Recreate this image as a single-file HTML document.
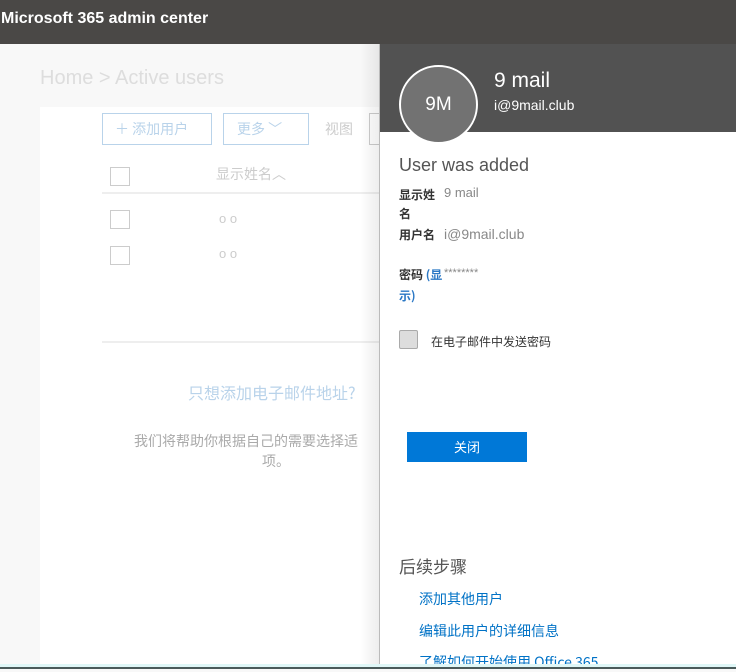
<!DOCTYPE html>
<html><head><meta charset="utf-8"><style>
*{margin:0;padding:0;box-sizing:border-box}
body{width:736px;height:669px;overflow:hidden;position:relative;background:#f8f8f8;font-family:"Liberation Sans","Noto Sans CJK SC",sans-serif}
.abs{position:absolute}
.top{left:0;top:0;width:736px;height:44px;background:#4a4846;color:#fff;font-weight:bold;font-size:16px;line-height:38px;padding-left:1px}
.cb{position:absolute;width:20px;height:19px;border:1px solid #ccc;background:#fff}
.cjk{font-family:"Noto Sans CJK SC",sans-serif}
</style></head><body>
<div class="abs top">Microsoft 365 admin center</div>
<div class="abs" style="left:40px;top:107px;width:340px;height:557px;background:#fff"></div>
<div class="abs" style="left:40px;top:67px;font-size:20px;color:#ddd">Home &gt; Active users</div>
<div class="abs cjk" style="left:102px;top:113px;width:110px;height:32px;border:1px solid #b9d3ea;color:#b9d3ea;font-size:14px;line-height:30px;padding-left:12px">＋ 添加用户</div>
<div class="abs cjk" style="left:223px;top:113px;width:86px;height:32px;border:1px solid #b9d3ea;color:#b9d3ea;font-size:14px;line-height:30px;padding-left:13px">更多 ﹀</div>
<div class="abs cjk" style="left:325px;top:119px;font-size:14px;color:#ccc">视图</div>
<div class="abs" style="left:369px;top:113px;width:10px;height:32px;border:1px solid #ccc;border-right:none"></div>
<div class="cb" style="left:110px;top:167px"></div>
<div class="abs cjk" style="left:216px;top:164px;font-size:14px;color:#ccc">显示姓名︿</div>
<div class="abs" style="left:102px;top:192px;width:278px;height:2px;background:#eee"></div>
<div class="cb" style="left:110px;top:210px"></div>
<div class="abs" style="left:219px;top:211px;font-size:13px;color:#ccc">o o</div>
<div class="cb" style="left:110px;top:246px"></div>
<div class="abs" style="left:219px;top:246px;font-size:13px;color:#ccc">o o</div>
<div class="abs" style="left:102px;top:341px;width:278px;height:2px;background:#eee"></div>
<div class="abs cjk" style="left:188px;top:380px;font-size:16px;color:#b9d3ea;white-space:nowrap">只想添加电子邮件地址?</div>
<div class="abs cjk" style="left:134px;top:431px;font-size:14px;color:#aaa;white-space:nowrap">我们将帮助你根据自己的需要选择适</div>
<div class="abs cjk" style="left:262px;top:451px;font-size:14px;color:#aaa">项。</div>
<div class="abs" style="left:360px;top:44px;width:19px;height:620px;background:linear-gradient(to right,rgba(0,0,0,0),rgba(0,0,0,0.07))"></div>
<div class="abs" style="left:379px;top:44px;width:357px;height:620px;background:#fff;border-left:1px solid #bbb"></div>
<div class="abs" style="left:380px;top:44px;width:356px;height:88px;background:#525252"></div>
<div class="abs" style="left:399px;top:65px;width:79px;height:79px;border-radius:50%;background:#727272;border:2px solid #fff;color:#fff;font-size:19px;text-align:center;line-height:75px">9M</div>
<div class="abs" style="left:494px;top:69px;font-size:21px;color:#fff">9 mail</div>
<div class="abs" style="left:494px;top:97px;font-size:14px;color:#fff">i@9mail.club</div>
<div class="abs" style="left:399px;top:155px;font-size:18px;color:#555">User was added</div>
<div class="abs cjk" style="left:399px;top:185px;font-size:12px;color:#333;font-weight:bold;line-height:19px">显示姓<br>名</div>
<div class="abs" style="left:444px;top:185px;font-size:13px;color:#888">9 mail</div>
<div class="abs cjk" style="left:399px;top:226px;font-size:12px;color:#333;font-weight:bold">用户名</div>
<div class="abs" style="left:444px;top:226px;font-size:14px;color:#888">i@9mail.club</div>
<div class="abs cjk" style="left:399px;top:266px;font-size:12px;color:#333;font-weight:bold">密码 <span style="color:#2b78c5">(显</span></div>
<div class="abs" style="left:444px;top:267px;font-size:11px;color:#888">********</div>
<div class="abs cjk" style="left:399px;top:287px;font-size:12px;color:#2b78c5;font-weight:bold">示)</div>
<div class="abs" style="left:399px;top:330px;width:19px;height:19px;border:1px solid #aaa;border-radius:2px;background:#ddd"></div>
<div class="abs cjk" style="left:431px;top:333px;font-size:12px;color:#333">在电子邮件中发送密码</div>
<div class="abs cjk" style="left:407px;top:432px;width:120px;height:30px;background:#0078d7;color:#fff;font-size:13px;text-align:center;line-height:30px">关闭</div>
<div class="abs cjk" style="left:399px;top:553px;font-size:17px;color:#555">后续步骤</div>
<div class="abs cjk" style="left:419px;top:589px;font-size:14px;color:#0072c6">添加其他用户</div>
<div class="abs cjk" style="left:419px;top:621px;font-size:14px;color:#0072c6">编辑此用户的详细信息</div>
<div class="abs cjk" style="left:419px;top:652px;font-size:14px;color:#0072c6;white-space:nowrap">了解如何开始使用 Office 365</div>
<div class="abs" style="left:0;top:664px;width:736px;height:4px;background:#dff7f7"></div>
<div class="abs" style="left:0;top:667px;width:736px;height:2px;background:#4a5a5a"></div>
</body></html>
